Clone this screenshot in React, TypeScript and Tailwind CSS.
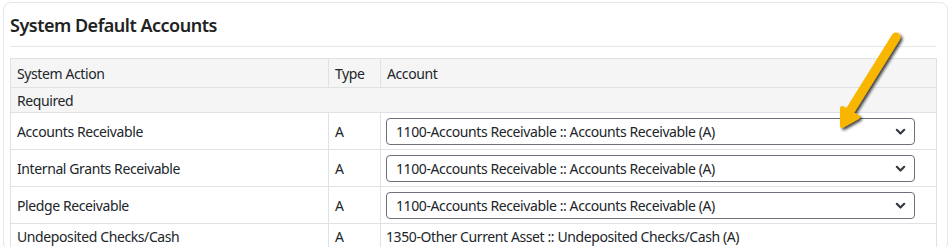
import React from 'react';

const accountOption = '1100-Accounts Receivable :: Accounts Receivable (A)';

const rows = [
  { action: 'Accounts Receivable', type: 'A', select: true },
  { action: 'Internal Grants Receivable', type: 'A', select: true },
  { action: 'Pledge Receivable', type: 'A', select: true },
  { action: 'Undeposited Checks/Cash', type: 'A', select: false, text: '1350-Other Current Asset :: Undeposited Checks/Cash (A)' },
];

function AccountSelect() {
  return (
    <div className="relative h-[27px] w-[529px] rounded-[4px] border border-[#6f6f7c] bg-white">
      <div className="flex h-full items-center pl-[9px] text-[#212529]">{accountOption}</div>
      <svg className="absolute right-[8px] top-[9px]" width="11" height="8" viewBox="0 0 11 8">
        <path d="M1.8 1.8 L5.5 5.5 L9.2 1.8" fill="none" stroke="#343a40" strokeWidth="2.2" strokeLinecap="round" strokeLinejoin="round" />
      </svg>
    </div>
  );
}

function Arrow() {
  return (
    <svg className="pointer-events-none absolute left-[830px] top-[26px]" width="90" height="115" viewBox="0 0 90 115">
      <defs>
        <filter id="shadow" x="-30%" y="-30%" width="160%" height="160%">
          <feDropShadow dx="2" dy="2" stdDeviation="1.6" floodColor="#000" floodOpacity="0.75" />
        </filter>
      </defs>
      <g filter="url(#shadow)">
        <path d="M66 11 L18 88" fill="none" stroke="#f8b600" strokeWidth="9" strokeLinecap="round" />
        <path d="M12 100 L12 82 L28 91 Z" fill="#f8b600" stroke="#f8b600" strokeWidth="4" strokeLinejoin="round" />
      </g>
    </svg>
  );
}

export default function App() {
  return (
    <div className="relative h-[247px] w-[951px] overflow-hidden bg-white text-[#212529]" style={{ fontFamily: '"Noto Sans", "Open Sans", sans-serif' }}>
      <div className="ml-[3px] mt-[2px] w-[945px] rounded-lg border border-[#e3e6ea] pl-[6px] pr-[11px]">
        <div className="flex h-[44px] items-center border-b border-[#e3e6ea] pt-[2px]">
          <h2 className="text-[18px] font-semibold tracking-[-0.5px] text-[#222]">System Default Accounts</h2>
        </div>
        <table className="mt-[11px] w-[927px] border-collapse text-[14px] tracking-[-0.4px]">
          <thead>
            <tr className="h-[29px] bg-[#f5f5f5]">
              <th className="w-[318px] border border-[#dee2e6] px-[6px] text-left font-normal">System Action</th>
              <th className="w-[52px] border border-[#dee2e6] px-[6px] text-left font-normal">Type</th>
              <th className="border border-[#dee2e6] px-[6px] text-left font-normal">Account</th>
            </tr>
          </thead>
          <tbody>
            <tr className="h-[25px] bg-[#f5f5f5]">
              <td colSpan={3} className="border border-[#dee2e6] px-[6px]">Required</td>
            </tr>
            {rows.map((row) => (
              <tr key={row.action} className={row.select ? 'h-[37px]' : 'h-[26px]'}>
                <td className="border border-[#dee2e6] px-[6px]">{row.action}</td>
                <td className="border border-[#dee2e6] px-[6px]">{row.type}</td>
                <td className="border border-[#dee2e6] px-[5px]">
                  {row.select ? <AccountSelect /> : row.text}
                </td>
              </tr>
            ))}
          </tbody>
        </table>
      </div>
      <Arrow />
    </div>
  );
}
